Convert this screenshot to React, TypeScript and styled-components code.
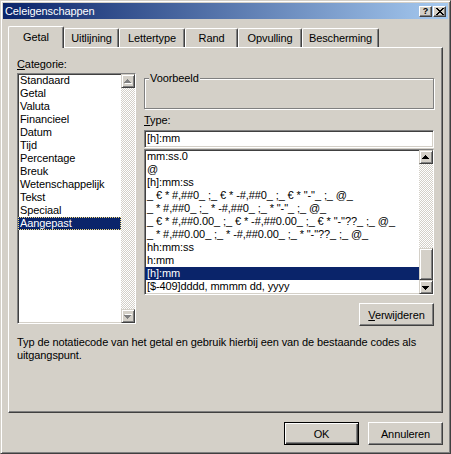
import React from 'react';
import styled, { createGlobalStyle, css } from 'styled-components';

const FACE = '#D4D0C8';
const SHADOW = '#808080';
const DARK = '#404040';
const HILITE = '#FFFFFF';
const SEL = '#0A246A';

const GlobalStyle = createGlobalStyle`
  html, body { margin: 0; padding: 0; background: ${FACE}; }
  body {
    font-family: "Liberation Sans", Arial, sans-serif;
    font-size: 11px;
    letter-spacing: -0.1px;
    color: #000;
  }
  * { box-sizing: border-box; }
`;

const raisedButton = css`
  border: 1px solid;
  border-color: ${HILITE} ${DARK} ${DARK} ${HILITE};
  box-shadow: inset -1px -1px ${SHADOW};
`;

const raisedFrame = css`
  border: 1px solid;
  border-color: ${FACE} ${DARK} ${DARK} ${FACE};
  box-shadow: inset 1px 1px ${HILITE}, inset -1px -1px ${SHADOW};
`;

const sunken = css`
  border: 1px solid;
  border-color: ${SHADOW} ${HILITE} ${HILITE} ${SHADOW};
  box-shadow: inset 1px 1px ${DARK}, inset -1px -1px ${FACE};
`;

const Window = styled.div`
  width: 451px;
  height: 454px;
  background: ${FACE};
  ${raisedFrame};
  padding: 2px;
  display: flex;
  flex-direction: column;
`;

const TitleBar = styled.div`
  height: 16px;
  display: flex;
  align-items: center;
  padding: 0 2px 0 2px;
  background: linear-gradient(to right, ${SEL}, #a6caf0);
  color: #fff;
`;

const TitleText = styled.div`
  flex: 1;
  line-height: 16px;
  font-size: 11px;
  white-space: nowrap;
`;

const CaptionButtons = styled.div`
  display: flex;
  gap: 1px;
`;

const CaptionButton = styled.div`
  width: 13px;
  height: 11px;
  background: ${FACE};
  ${raisedButton};
  display: flex;
  align-items: center;
  justify-content: center;
  color: #000;
  font-weight: bold;
  font-size: 9px;
  line-height: 9px;
`;

const Body = styled.div`
  flex: 1;
  display: flex;
  flex-direction: column;
  padding: 7px 5px 6px 5px;
`;

const TabStrip = styled.div`
  height: 21px;
  display: flex;
  align-items: flex-end;
`;

const Tab = styled.div<{ $active?: boolean; $w: number }>`
  width: ${(p) => p.$w}px;
  height: ${(p) => (p.$active ? 22 : 19)}px;
  margin-bottom: ${(p) => (p.$active ? -1 : 0)}px;
  position: relative;
  z-index: ${(p) => (p.$active ? 1 : 0)};
  background: ${FACE};
  border-left: 1px solid ${HILITE};
  border-top: 1px solid ${HILITE};
  border-right: 1px solid ${DARK};
  box-shadow: inset -1px 0 ${SHADOW};
  border-radius: 2px 2px 0 0;
  text-align: center;
  padding-top: ${(p) => (p.$active ? 4 : 3)}px;
  line-height: 13px;
  white-space: nowrap;
`;

const Panel = styled.div`
  height: 366px;
  border: 1px solid;
  border-color: ${HILITE} ${DARK} ${DARK} ${HILITE};
  box-shadow: inset -1px -1px ${SHADOW};
  padding: 10px 8px 0 8px;
  display: flex;
  flex-direction: column;
`;

const PanelRow = styled.div`
  display: flex;
  gap: 8px;
`;

const LeftCol = styled.div`
  width: 119px;
  display: flex;
  flex-direction: column;
`;

const RightCol = styled.div`
  flex: 1;
  display: flex;
  flex-direction: column;
`;

const FieldLabel = styled.div<{ $mt?: number }>`
  height: 13px;
  line-height: 13px;
  margin-top: ${(p) => p.$mt ?? 0}px;
`;

const Accel = styled.span`
  text-decoration: underline;
  text-underline-offset: 1px;
`;

const ListBox = styled.div<{ $h: number; $mt: number }>`
  height: ${(p) => p.$h}px;
  margin-top: ${(p) => p.$mt}px;
  background: #fff;
  ${sunken};
  display: flex;
  overflow: hidden;
`;

const Rows = styled.div`
  flex: 1;
  overflow: hidden;
`;

const Item = styled.div<{ $selected?: boolean; $focus?: boolean }>`
  height: 13px;
  line-height: 13px;
  padding-left: 2px;
  white-space: pre;
  overflow: hidden;
  background: ${(p) => (p.$selected ? SEL : 'transparent')};
  color: ${(p) => (p.$selected ? '#fff' : '#000')};
  ${(p) =>
    p.$focus &&
    css`
      outline: 1px dotted #f0d878;
      outline-offset: -1px;
    `}
`;

const ScrollBar = styled.div`
  width: 14px;
  flex-shrink: 0;
  display: flex;
  flex-direction: column;
`;

const ScrollButton = styled.div`
  height: 14px;
  flex-shrink: 0;
  background: ${FACE};
  ${raisedFrame};
  display: flex;
  align-items: center;
  justify-content: center;
`;

const Track = styled.div`
  flex: 1;
  display: flex;
  flex-direction: column;
  justify-content: flex-end;
  background: repeating-conic-gradient(${HILITE} 0 25%, ${FACE} 0 50%) 0 0 / 2px 2px;
`;

const Thumb = styled.div<{ $h: number }>`
  height: ${(p) => p.$h}px;
  background: ${FACE};
  ${raisedFrame};
`;

const GroupBox = styled.fieldset`
  margin: 1px 0 0 0;
  padding: 0;
  min-width: 0;
  border: 1px solid ${SHADOW};
  box-shadow: inset 1px 1px ${HILITE}, 1px 1px ${HILITE};
`;

const Legend = styled.legend`
  margin-left: 4px;
  padding: 0 1px;
  line-height: 13px;
  background: ${FACE};
`;

const GroupContent = styled.div`
  height: 23px;
`;

const TextField = styled.div`
  height: 18px;
  margin-top: 3px;
  background: #fff;
  ${sunken};
  padding-left: 2px;
  line-height: 15px;
  white-space: pre;
`;

const PushButton = styled.div<{ $default?: boolean; $mt?: number }>`
  width: 75px;
  height: 23px;
  margin-top: ${(p) => p.$mt ?? 0}px;
  background: ${FACE};
  display: flex;
  align-items: center;
  justify-content: center;
  ${(p) =>
    p.$default
      ? css`
          border: 1px solid #000;
          box-shadow: inset 1px 1px ${HILITE}, inset -1px -1px ${DARK}, inset -2px -2px ${SHADOW};
        `
      : raisedButton};
`;

const ButtonRow = styled.div`
  display: flex;
  justify-content: flex-end;
`;

const Hint = styled.div`
  margin-top: 10px;
  line-height: 13px;
`;

const Footer = styled.div`
  margin-top: 9px;
  display: flex;
  justify-content: flex-end;
  gap: 9px;
`;

const Arrow: React.FC<{ down?: boolean; disabled?: boolean }> = ({ down, disabled }) => {
  const d = 'M3 0h1v1h-1z M2 1h3v1h-3z M1 2h5v1h-5z M0 3h7v1h-7z';
  return (
    <svg
      width="8"
      height="5"
      viewBox="0 0 8 5"
      shapeRendering="crispEdges"
      style={{ transform: down ? 'scaleY(-1)' : undefined, display: 'block' }}
    >
      {disabled && <path d={d} fill="#fff" transform="translate(1 1)" />}
      <path d={d} fill={disabled ? SHADOW : '#000'} />
    </svg>
  );
};

const CloseGlyph = () => (
  <svg width="8" height="7" viewBox="0 0 8 7" shapeRendering="crispEdges" style={{ display: 'block' }}>
    <path
      d="M0 0h2v1h-2z M6 0h2v1h-2z M1 1h2v1h-2z M5 1h2v1h-2z M2 2h4v1h-4z M3 3h2v1h-2z M2 4h4v1h-4z M1 5h2v1h-2z M5 5h2v1h-2z M0 6h2v1h-2z M6 6h2v1h-2z"
      fill="#000"
    />
  </svg>
);

const tabs = [
  { label: 'Getal', w: 56, active: true },
  { label: 'Uitlijning', w: 55 },
  { label: 'Lettertype', w: 66 },
  { label: 'Rand', w: 53 },
  { label: 'Opvulling', w: 64 },
  { label: 'Bescherming', w: 77 },
];

const categories = [
  'Standaard',
  'Getal',
  'Valuta',
  'Financieel',
  'Datum',
  'Tijd',
  'Percentage',
  'Breuk',
  'Wetenschappelijk',
  'Tekst',
  'Speciaal',
  'Aangepast',
];

const formats = [
  'mm:ss.0',
  '@',
  '[h]:mm:ss',
  '_ € * #,##0_ ;_ € * -#,##0_ ;_ € * "-"_ ;_ @_',
  '_ * #,##0_ ;_ * -#,##0_ ;_ * "-"_ ;_ @_',
  '_ € * #,##0.00_ ;_ € * -#,##0.00_ ;_ € * "-"??_ ;_ @_',
  '_ * #,##0.00_ ;_ * -#,##0.00_ ;_ * "-"??_ ;_ @_',
  'hh:mm:ss',
  'h:mm',
  '[h]:mm',
  '[$-409]dddd, mmmm dd, yyyy',
];

export default function App() {
  return (
    <>
      <GlobalStyle />
      <Window>
        <TitleBar>
          <TitleText>Celeigenschappen</TitleText>
          <CaptionButtons>
            <CaptionButton>?</CaptionButton>
            <CaptionButton>
              <CloseGlyph />
            </CaptionButton>
          </CaptionButtons>
        </TitleBar>
        <Body>
          <TabStrip>
            {tabs.map((t) => (
              <Tab key={t.label} $w={t.w} $active={t.active}>
                {t.label}
              </Tab>
            ))}
          </TabStrip>
          <Panel>
            <PanelRow>
              <LeftCol>
                <FieldLabel>
                  <Accel>C</Accel>ategorie:
                </FieldLabel>
                <ListBox $h={251} $mt={2}>
                  <Rows>
                    {categories.map((c) => (
                      <Item key={c} $selected={c === 'Aangepast'} $focus={c === 'Aangepast'}>
                        {c}
                      </Item>
                    ))}
                  </Rows>
                  <ScrollBar>
                    <ScrollButton>
                      <Arrow disabled />
                    </ScrollButton>
                    <Track />
                    <ScrollButton>
                      <Arrow down disabled />
                    </ScrollButton>
                  </ScrollBar>
                </ListBox>
              </LeftCol>
              <RightCol>
                <FieldLabel />
                <GroupBox>
                  <Legend>Voorbeeld</Legend>
                  <GroupContent />
                </GroupBox>
                <FieldLabel $mt={5}>
                  <Accel>T</Accel>ype:
                </FieldLabel>
                <TextField>[h]:mm</TextField>
                <ListBox $h={146} $mt={1}>
                  <Rows>
                    {formats.map((f) => (
                      <Item key={f} $selected={f === '[h]:mm'}>
                        {f}
                      </Item>
                    ))}
                  </Rows>
                  <ScrollBar>
                    <ScrollButton>
                      <Arrow />
                    </ScrollButton>
                    <Track>
                      <Thumb $h={32} />
                    </Track>
                    <ScrollButton>
                      <Arrow down />
                    </ScrollButton>
                  </ScrollBar>
                </ListBox>
                <ButtonRow>
                  <PushButton $mt={8}>
                    <span>
                      <Accel>V</Accel>erwijderen
                    </span>
                  </PushButton>
                </ButtonRow>
              </RightCol>
            </PanelRow>
            <Hint>
              Typ de notatiecode van het getal en gebruik hierbij een van de bestaande codes als
              <br />
              uitgangspunt.
            </Hint>
          </Panel>
          <Footer>
            <PushButton $default>OK</PushButton>
            <PushButton>Annuleren</PushButton>
          </Footer>
        </Body>
      </Window>
    </>
  );
}
